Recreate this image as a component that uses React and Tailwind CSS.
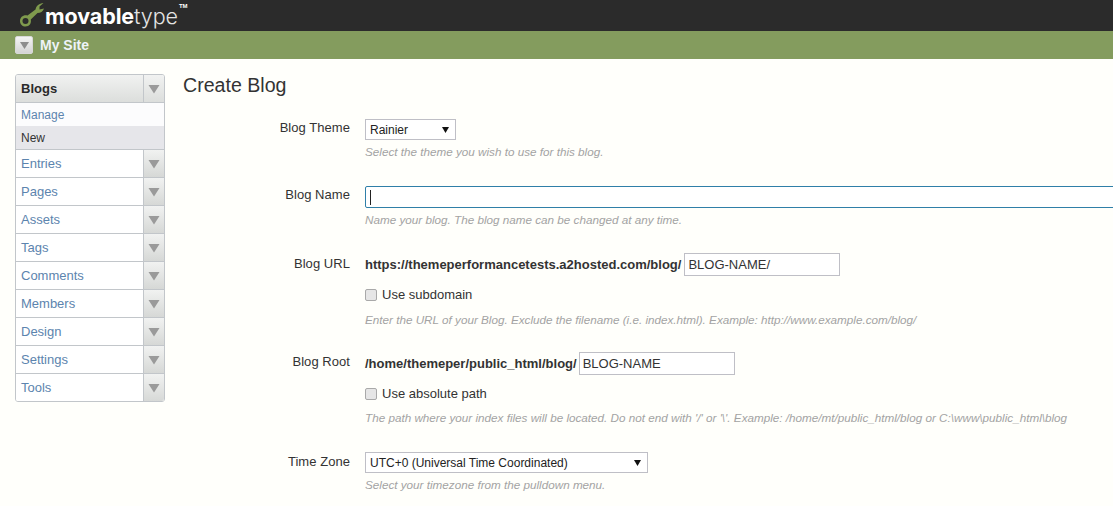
const navItems = ["Entries", "Pages", "Assets", "Tags", "Comments", "Members", "Design", "Settings", "Tools"];

function Arrow() {
    return (
        <svg width="12" height="10" viewBox="0 0 12 10">
            <path d="M0.5 1H11.5L6 9.5Z" fill="#9a9a9a" />
        </svg>
    );
}

function SelectBox({ width, value }) {
    return (
        <div className={`${width} h-[21px] border border-[#bfbfc6] bg-white flex items-center justify-between pl-[4px] pr-[6px] text-[12px] text-[#222]`}>
            <span>{value}</span>
            <svg width="7" height="6" viewBox="0 0 7 6">
                <path d="M0 0H7L3.5 6Z" fill="#111" />
            </svg>
        </div>
    );
}

function Hint({ children, className = "" }) {
    return <p className={`text-[11.7px] italic leading-[14px] text-[#a3a3a3] ${className}`}>{children}</p>;
}

function Check({ label }) {
    return (
        <label className="flex items-center gap-[5px] h-[16px] text-[13px] text-[#333]">
            <span className="w-[12px] h-[12px] rounded-[2px] border border-[#a9a9a9] bg-[#e6e6e6]" />
            {label}
        </label>
    );
}

function Row({ label, labelTop, className = "", children }) {
    return (
        <div className={`flex ${className}`}>
            <div className={`w-[167px] shrink-0 text-right text-[13px] tracking-[0.05px] leading-[16px] text-[#333] ${labelTop}`}>{label}</div>
            <div className="ml-[15px] flex-1 min-w-0">{children}</div>
        </div>
    );
}

function PathRow({ prefix, value, gap }) {
    return (
        <div className="flex items-center h-[23px] whitespace-nowrap">
            <span className="text-[13px] font-bold text-[#333]">{prefix}</span>
            <div className={`${gap} w-[156px] h-[23px] border border-[#bfbfc6] bg-white pl-[3px] text-[13px] leading-[21px] text-[#333]`}>{value}</div>
        </div>
    );
}

export default function App() {
    return (
        <div className="w-[1113px] h-[506px] overflow-hidden bg-[#fffffb] font-['Liberation_Sans',Arial,sans-serif]">
            {/* Header */}
            <div className="h-[31px] bg-[#2b2b2b] flex items-start pl-[20px]">
                <svg width="24" height="24" viewBox="0 0 24 24" className="mt-[3px]">
                    <path d="M23.500 0C19 0.500 16.500 2.500 15.500 6.500L7.500 12.500C3.500 11.500 0 14 0 18C0 21.500 2.500 23.500 5.500 23.500C9.500 23.500 11.500 20.500 10.800 16.500L17.500 10C20.500 10 23 8.500 24 5.500L19.500 6.500L19.500 3.500Z" fill="#7f9a4d" />
                    <circle cx="5.500" cy="18" r="3" fill="#2b2b2b" />
                </svg>
                <div className="ml-[1px] mt-[4px] text-[21.5px] leading-[25px] tracking-[-0.1px] text-white whitespace-nowrap font-['Inter',sans-serif]">
                    <span className="font-bold">movable</span>
                    <span className="font-light text-[#e4e4e4]">type</span>
                </div>
                <span className="ml-[1px] mt-[3px] text-[6px] leading-[6px] font-bold text-white">TM</span>
            </div>

            {/* Site bar */}
            <div className="h-[28px] bg-[#849c5e] flex items-center pl-[15px]">
                <div className="w-[18px] h-[18px] rounded-[2px] border border-[#d8d8d8] bg-gradient-to-b from-[#f4f4f4] to-[#d4d4d4] flex items-center justify-center">
                    <svg width="9" height="7" viewBox="0 0 9 7">
                        <path d="M0 0H9L4.500 7Z" fill="#8d8d8d" />
                    </svg>
                </div>
                <span className="ml-[7px] text-[14px] font-bold text-[#eef3f8]">My Site</span>
            </div>

            <div className="flex">
                {/* Sidebar */}
                <div className="ml-[15px] mt-[15px] w-[150px] h-[328px] shrink-0 rounded-[3px] border border-[#c2c6ca] overflow-hidden text-[13px]">
                    <div className="h-[28px] flex border-b border-[#c2c6ca] bg-gradient-to-b from-[#f1f2f1] to-[#dcdedc]">
                        <div className="flex-1 pl-[5px] font-bold leading-[27px] text-[#2a2a2a]">Blogs</div>
                        <div className="w-[21px] border-l border-[#c2c6ca] flex items-center justify-center">
                            <Arrow />
                        </div>
                    </div>
                    <div className="h-[23px] pl-[5px] bg-[#fcfcfd] text-[12px] leading-[25px] text-[#5c84ae]">Manage</div>
                    <div className="h-[24px] pl-[5px] bg-[#e6e6ea] text-[12px] leading-[25px] text-[#333] border-b border-[#c2c6ca]">New</div>
                    {navItems.map((item, i) => (
                        <div key={item} className={`h-[28px] flex bg-white ${i < navItems.length - 1 ? "border-b border-[#c2c6ca]" : ""}`}>
                            <div className="flex-1 pl-[5px] leading-[27px] text-[#5c84ae]">{item}</div>
                            <div className="w-[21px] border-l border-[#c2c6ca] bg-gradient-to-b from-[#f1f2f1] to-[#d6d8d6] flex items-center justify-center">
                                <Arrow />
                            </div>
                        </div>
                    ))}
                </div>

                {/* Content */}
                <div className="ml-[18px] flex-1 min-w-0">
                    <h1 className="mt-[15px] text-[19.6px] leading-[23px] text-[#333]">Create Blog</h1>

                    <Row label="Blog Theme" className="mt-[22px]" labelTop="mt-[1px]">
                        <SelectBox width="w-[91px]" value="Rainier" />
                        <Hint className="mt-[5px]">Select the theme you wish to use for this blog.</Hint>
                    </Row>

                    <Row label="Blog Name" className="mt-[27px]" labelTop="mt-[1px]">
                        <div className="h-[22px] border border-[#2f7fa8] rounded-l-[2px] bg-white flex items-center pl-[4px] -mr-[3px]">
                            <span className="w-[1px] h-[15px] bg-[#222]" />
                        </div>
                        <Hint className="mt-[5px]">Name your blog. The blog name can be changed at any time.</Hint>
                    </Row>

                    <Row label="Blog URL" className="mt-[26px]" labelTop="mt-[3px]">
                        <PathRow prefix="https://themeperformancetests.a2hosted.com/blog/" value="BLOG-NAME/" gap="ml-[3px]" />
                        <div className="mt-[11px]">
                            <Check label="Use subdomain" />
                        </div>
                        <Hint className="mt-[10px]">Enter the URL of your Blog. Exclude the filename (i.e. index.html). Example: http://www.example.com/blog/</Hint>
                    </Row>

                    <Row label="Blog Root" className="mt-[25px]" labelTop="mt-[2px]">
                        <PathRow prefix="/home/themeper/public_html/blog/" value="BLOG-NAME" gap="ml-[2px]" />
                        <div className="mt-[11px]">
                            <Check label="Use absolute path" />
                        </div>
                        <Hint className="mt-[9px]">The path where your index files will be located. Do not end with '/' or '\'. Example: /home/mt/public_html/blog or C:\www\public_html\blog</Hint>
                    </Row>

                    <Row label="Time Zone" className="mt-[27px]" labelTop="mt-[2px]">
                        <SelectBox width="w-[283px]" value="UTC+0 (Universal Time Coordinated)" />
                        <Hint className="mt-[5px]">Select your timezone from the pulldown menu.</Hint>
                    </Row>
                </div>
            </div>
        </div>
    );
}
